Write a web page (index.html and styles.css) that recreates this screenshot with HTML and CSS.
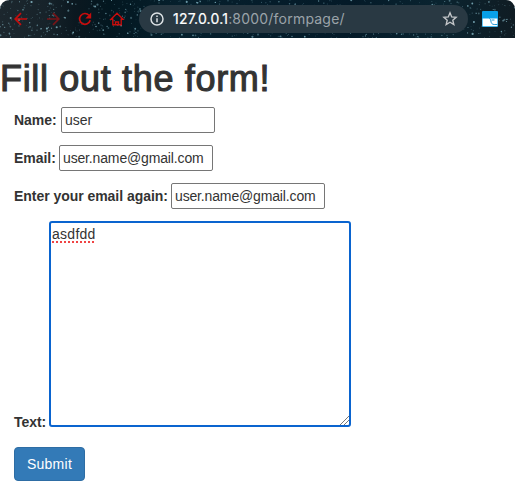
FILE: index.html
```html
<!DOCTYPE html>
<html lang="en">
<head>
<meta charset="utf-8">
<title>Form</title>
<link rel="stylesheet" href="styles.css">
</head>
<body>
<header class="toolbar">
  <svg class="stars" id="stars" width="515" height="38" aria-hidden="true"></svg>
  <nav class="nav">
    <svg width="16" height="16" viewBox="0 0 16 16"><path d="M14 8H2.5M8 2.2 2.2 8 8 13.8"/></svg>
    <svg class="dim" width="16" height="16" viewBox="0 0 16 16"><path d="M2 8h11.5M8 2.2 13.8 8 8 13.8"/></svg>
    <svg width="16" height="16" viewBox="0 0 16 16"><path d="M13.2 9.3A5.4 5.4 0 1 1 12 4.3"/><path class="solid" d="M14.2 1.5v6H8.3z"/></svg>
    <svg width="16" height="16" viewBox="0 0 16 16"><path class="home" d="M2 8.2 8 2.3l6 5.9h-1.8v5.6H3.8V8.2z"/><path class="home" d="M6.5 13.8V11h3v2.8"/></svg>
  </nav>
  <div class="address">
    <svg class="info" width="14" height="14" viewBox="0 0 14 14"><circle cx="7" cy="7" r="6"/><path d="M7 6.3v4M7 3.5v1.6"/></svg>
    <span class="url"><span class="host">127.0.0.1</span>:8000/formpage/</span>
    <svg class="star" width="16" height="16" viewBox="0 0 16 16"><path d="m8 1.8 1.7 4.1 4.4.4-3.3 2.9 1 4.3L8 11.2l-3.8 2.3 1-4.3-3.3-2.9 4.4-.4z"/></svg>
  </div>
  <svg class="extension" width="16" height="16" viewBox="0 0 16 16"><rect width="16" height="16" rx="1" fill="#08a0e9"/><path d="M.6 7.5h14.8v7.8H.6z" fill="#fff"/><path d="M7.2 7.5c1 0 1.3.8 1.6 2.3.4 2.4 1.2 3.7 3.4 3.7h3.2M9.5 9h3" fill="none" stroke="#2599d5"/></svg>
</header>
<main>
  <h1>Fill out the form!</h1>
  <form class="form">
    <div class="row"><label class="name-label" for="name">Name:</label><input id="name" type="text" value="user"></div>
    <div class="row"><label class="email-label" for="email">Email:</label><input id="email" type="text" value="user.name@gmail.com"></div>
    <div class="row"><label class="again-label" for="again">Enter your email again:</label><input id="again" type="text" value="user.name@gmail.com"></div>
    <div class="row text-row"><label class="text-label">Text:</label><div class="textarea" role="textbox"><span class="misspelled">asdfdd</span><svg class="grip" width="9" height="9" viewBox="0 0 9 9"><path d="M0 9 9 0M4 9l5-5"/></svg></div></div>
    <button type="button">Submit</button>
  </form>
</main>
<script src="stars.js"></script>
</body>
</html>
```
FILE: styles.css
```css
* { box-sizing: border-box; }
body {
  margin: 0;
  height: 504px;
  overflow: hidden;
  background: #fff;
  color: #333;
  font: 14px/20px "Liberation Sans", Arial, sans-serif;
}
.toolbar {
  position: relative;
  display: flex;
  align-items: center;
  height: 38px;
  padding-left: 13px;
  overflow: hidden;
  border-radius: 9px 9px 0 0;
  background: linear-gradient(90deg, #1c272e 0, #17232a 45px, #0b1820 75px, #031720 110px, #06202d 180px, #041a28 350px, #0a2430 440px, #101c23 515px);
}
.stars { position: absolute; inset: 0; }
.stars circle { fill: #8cc0ce; }
.nav { position: relative; display: flex; gap: 16px; width: 126px; flex: none; }
.nav svg { flex: none; }
.nav path { fill: none; stroke: #c60d0d; stroke-width: 1.7; }
.nav .home { stroke-width: 1.4; }
.nav .solid { fill: #c60d0d; stroke: none; }
.nav .dim { opacity: .55; }
.address {
  position: relative;
  display: flex;
  align-items: center;
  width: 329px;
  height: 28px;
  padding: 0 10px 0 11px;
  border-radius: 14px;
  background: #293943;
}
.info { fill: none; stroke: #dce1e4; stroke-width: 1.5; }
.url {
  margin-left: 9px;
  color: #9ba3a9;
  font: 14px/20px Inter, sans-serif;
  letter-spacing: .21px;
  white-space: nowrap;
}
.host { color: #fff; -webkit-text-stroke: .2px #fff; }
.star { margin-left: auto; fill: none; stroke: #c2c5c8; stroke-width: 1.4; }
.extension { position: relative; margin-left: 14px; }
h1 {
  margin: 21px 0 8px;
  font-size: 36px;
  line-height: 40px;
  font-weight: 400;
  letter-spacing: .67px;
  -webkit-text-stroke: 1.1px #333;
  white-space: nowrap;
}
.form { padding-left: 14px; }
.row { display: flex; align-items: center; height: 26px; margin-bottom: 12px; }
label { flex: none; font-weight: 700; white-space: nowrap; letter-spacing: -.04px; }
.name-label { width: 47px; }
.email-label { width: 45px; }
.again-label { width: 157px; }
.text-label { width: 35px; }
input {
  width: 154px;
  height: 26px;
  padding: 1px 3px;
  border: 1px solid #767676;
  border-radius: 2px;
  outline: 0;
  background: #fff;
  color: #333;
  font: inherit;
  letter-spacing: -.15px;
}
#name { letter-spacing: 0; }
.text-row { align-items: flex-end; height: 206px; margin-bottom: 20px; }
.text-label { margin-bottom: -5px; }
.textarea {
  position: relative;
  width: 302px;
  height: 206px;
  padding: 1px;
  border: 2px solid #0a64cf;
  border-radius: 3px;
}
.misspelled {
  letter-spacing: .27px;
  text-decoration: underline dotted #f04444 2px;
  text-decoration-skip-ink: none;
  text-underline-offset: 2px;
}
.grip { position: absolute; right: 0; bottom: 0; fill: none; stroke: #777; }
button {
  display: block;
  width: 71px;
  height: 34px;
  padding: 0;
  border: 1px solid #2e6da4;
  border-radius: 4px;
  background: #337ab7;
  color: #fff;
  font: inherit;
  letter-spacing: .25px;
}
```
FILE: stars.js
```js
// Scatter a repeatable star field over the toolbar.
const field = document.getElementById("stars");
let seed = 127;
function next() {
  seed = (seed * 16807) % 2147483647;
  return seed / 2147483647;
}
for (let i = 0; i < 850; i++) {
  const star = document.createElementNS("http://www.w3.org/2000/svg", "circle");
  star.setAttribute("cx", (next() * 515).toFixed(1));
  star.setAttribute("cy", (next() * 38).toFixed(1));
  star.setAttribute("r", (0.35 + next() * next() * 0.85).toFixed(2));
  star.setAttribute("opacity", (0.2 + next() * 0.6).toFixed(2));
  field.appendChild(star);
}
```
